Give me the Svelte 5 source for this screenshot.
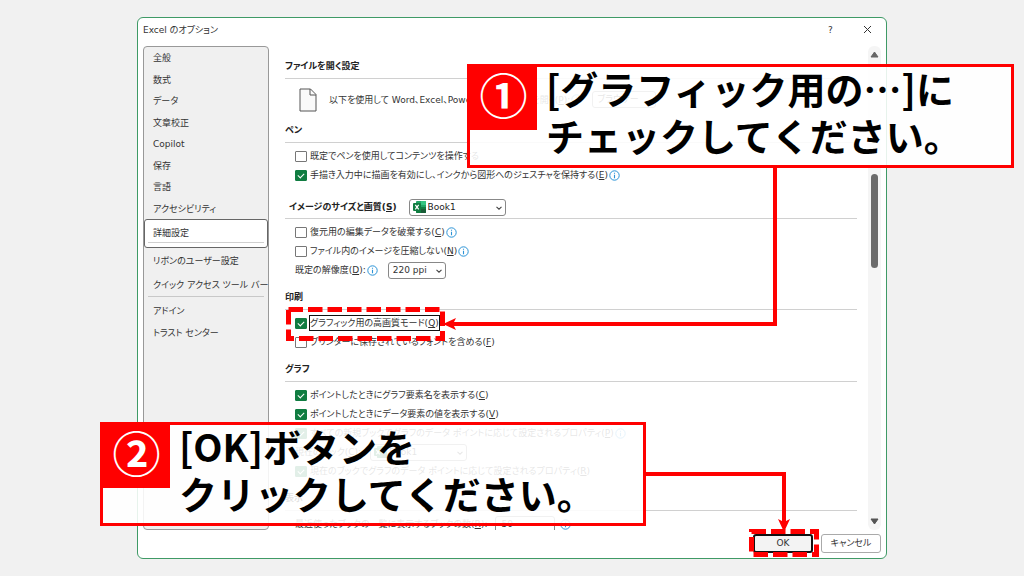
<script lang="ts">
  const navTop = ["全般", "数式", "データ", "文章校正", "Copilot", "保存", "言語", "アクセシビリティ"];
  const navMid = ["リボンのユーザー設定", "クイック アクセス ツール バー"];
  const navEnd = ["アドイン", "トラスト センター"];

  let selected = $state("詳細設定");
  let checks = $state({
    pen: false,
    ink: true,
    discard: false,
    noCompress: false,
    highQuality: true,
    printerFonts: false,
    elementNames: true,
    dataValues: true,
    allBooks: true,
    thisBook: true,
  });
  let recent = $state("50");
</script>

{#snippet info()}
  <svg class="info" viewBox="0 0 11 11" aria-hidden="true">
    <circle cx="5.5" cy="5.5" r="4.7" fill="none" stroke="#2b93d6" />
    <path d="M5.5 4.8V8.2M5.5 2.7V3.8" stroke="#2b93d6" stroke-width="1.1" />
  </svg>
{/snippet}

{#snippet chevron()}
  <svg class="chevron" viewBox="0 0 8 8" aria-hidden="true">
    <path d="M1.5 2.8L4 5.2L6.5 2.8" fill="none" stroke="#444" stroke-width="1.1" />
  </svg>
{/snippet}

{#snippet excel()}
  <svg class="excel" viewBox="0 0 13 12" aria-hidden="true">
    <path d="M4 0H12Q13 0 13 1V11Q13 12 12 12H4Q3 12 3 11V1Q3 0 4 0Z" fill="#21a366" />
    <path d="M8 0H12Q13 0 13 1V4H8Z" fill="#33c481" />
    <path d="M3 6H13V11Q13 12 12 12H4Q3 12 3 11Z" fill="#107c41" />
    <path d="M8 8H13V11Q13 12 12 12H8Z" fill="#185c37" />
    <rect y="2" width="8" height="8" rx="1" fill="#107c41" />
    <path d="M2.3 3.8L5.7 8.3M5.7 3.8L2.3 8.3" stroke="#fff" stroke-width="1.2" />
  </svg>
{/snippet}

{#snippet check(name: keyof typeof checks, text: string, key = "", hint = false, focused = false)}
  <div class="row">
    <label class="check">
      <input type="checkbox" bind:checked={checks[name]} />
      <span class="text" class:focused>{text}{#if key}({@render accel(key)}){/if}</span>
    </label>
    {#if hint}{@render info()}{/if}
  </div>
{/snippet}

{#snippet accel(key: string)}<u>{key}</u>{/snippet}

{#snippet navItem(item: string)}
  <button class="nav-item" onclick={() => (selected = item)}>{item}</button>
{/snippet}

<div class="stage">
  <div class="dialog" role="dialog" aria-labelledby="title">
    <header>
      <span id="title">Excel のオプション</span>
      <button class="icon" aria-label="ヘルプ">?</button>
      <button class="icon" aria-label="閉じる">
        <svg width="9" height="9" viewBox="0 0 9 9"><path d="M1 1L8 8M8 1L1 8" stroke="#333" /></svg>
      </button>
    </header>

    <div class="body">
      <nav>
        <div class="group top">
          {#each navTop as item}{@render navItem(item)}{/each}
        </div>
        <button class="nav-item active" aria-current={selected === "詳細設定"}>詳細設定</button>
        <div class="group mid">
          {#each navMid as item}{@render navItem(item)}{/each}
        </div>
        <div class="group end">
          {#each navEnd as item}{@render navItem(item)}{/each}
        </div>
      </nav>

      <main>
        <section>
          <h2>ファイルを開く設定</h2>
          <div class="open-row">
            <svg class="page" viewBox="0 0 18 24" aria-hidden="true">
              <path d="M1 1H11.5L17 6.5V23H1Z" fill="#fafafa" stroke="#555" />
              <path d="M11 1V7H17" fill="none" stroke="#555" />
            </svg>
            <label for="open-with">以下を使用して Word、Excel、PowerPoint ファイルを開く({@render accel("P")}):</label>
            {@render info()}
            <span class="select gap">
              <select id="open-with" class="browser"><option>ブラウザー</option></select>
            </span>
          </div>
        </section>

        <section>
          <h2>ペン</h2>
          <div class="rows">
            {@render check("pen", "既定でペンを使用してコンテンツを操作する")}
            {@render check("ink", "手描き入力中に描画を有効にし、インクから図形へのジェスチャを保持する", "E", true)}
          </div>
        </section>

        <section>
          <h2 class="with-select">
            <label for="image-book">イメージのサイズと画質({@render accel("S")})</label>
            <span class="select">
              {@render excel()}
              <select id="image-book" class="book"><option>Book1</option></select>
              {@render chevron()}
            </span>
          </h2>
          <div class="rows">
            {@render check("discard", "復元用の編集データを破棄する", "C", true)}
            {@render check("noCompress", "ファイル内のイメージを圧縮しない", "N", true)}
            <div class="row">
              <label for="ppi">既定の解像度({@render accel("D")}):</label>
              {@render info()}
              <span class="select gap">
                <select id="ppi" class="ppi"><option>220 ppi</option></select>
                {@render chevron()}
              </span>
            </div>
          </div>
        </section>

        <section>
          <h2>印刷</h2>
          <div class="rows">
            {@render check("highQuality", "グラフィック用の高画質モード", "Q", false, true)}
            {@render check("printerFonts", "プリンターに保存されているフォントを含める", "F")}
          </div>
        </section>

        <section>
          <h2>グラフ</h2>
          <div class="rows">
            {@render check("elementNames", "ポイントしたときにグラフ要素名を表示する", "C")}
            {@render check("dataValues", "ポイントしたときにデータ要素の値を表示する", "V")}
            {@render check("allBooks", "すべての新規ブックでグラフのデータ ポイントに応じて設定されるプロパティ", "P", true)}
            <div class="row">
              <label for="chart-book">現在のブック({@render accel("C")}):</label>
              <span class="select gap">
                {@render excel()}
                <select id="chart-book" class="book"><option>Book1</option></select>
                {@render chevron()}
              </span>
            </div>
            {@render check("thisBook", "現在のブックでグラフのデータ ポイントに応じて設定されるプロパティ", "R")}
          </div>
        </section>

        <section>
          <h2>表示</h2>
          <div class="rows">
            <div class="row">
              <label for="recent">最近使ったブックの一覧に表示するブックの数({@render accel("R")}):</label>
              <input id="recent" class="number" bind:value={recent} />
              {@render info()}
            </div>
          </div>
        </section>
      </main>

      <div class="scrollbar">
        <svg width="9" height="7" viewBox="0 0 9 7"><path d="M4.5 1L8 6H1Z" fill="#666" stroke="#666" stroke-linejoin="round" /></svg>
        <div class="track"><div class="thumb"></div></div>
        <svg width="9" height="7" viewBox="0 0 9 7"><path d="M4.5 6L8 1H1Z" fill="#555" stroke="#555" stroke-linejoin="round" /></svg>
      </div>
    </div>

    <footer>
      <button class="ok">OK</button>
      <button>キャンセル</button>
    </footer>
  </div>

  <!-- annotations over the dialog -->
  <svg class="marks" width="1024" height="576" viewBox="0 0 1024 576" aria-hidden="true">
    <g fill="none" stroke="#f00">
      <rect x="288.5" y="309.5" width="154" height="29" stroke-width="5" stroke-dasharray="14.5 5" />
      <rect x="751.5" y="531.5" width="65" height="23" stroke-width="5" stroke-dasharray="14.5 5" />
      <path d="M775 166V324H451M644 474H784V524" stroke-width="4" />
    </g>
    <path d="M443 324L456 318L453 324L456 330ZM784 532L778 519L784 522L790 519Z" fill="#f00" />
  </svg>
  <div class="callout first">
    <span class="number-box">①</span>
    <p>[グラフィック用の…]に<br />チェックしてください。</p>
  </div>
  <div class="callout second">
    <span class="number-box">②</span>
    <p>[OK]ボタンを<br />クリックしてください。</p>
  </div>
</div>

<style>
  :global(body) {
    background: #f1f1f1;
  }
  .stage {
    position: relative;
    box-sizing: border-box;
    height: 100vh;
    padding: 17px 137px;
    overflow: hidden;
    color: #333;
    font: 9px/18px "DejaVu Sans", "Noto Sans CJK JP", sans-serif;
    font-feature-settings: "palt";
  }
  .stage * {
    box-sizing: border-box;
  }
  button,
  select,
  input {
    margin: 0;
    color: inherit;
    font: inherit;
    font-feature-settings: inherit;
  }
  .dialog {
    display: flex;
    flex-direction: column;
    height: 100%;
    border: 1px solid #3f9a66;
    border-radius: 6px;
    background: #fff;
  }
  header {
    display: flex;
    align-items: center;
    height: 28px;
    padding: 0 10px 5px 5px;
  }
  header span {
    flex: 1;
  }
  .icon {
    display: flex;
    align-items: center;
    justify-content: center;
    width: 17px;
    height: 18px;
    margin-left: 20px;
    padding: 0;
    border: 0;
    background: none;
  }
  .body {
    display: flex;
    flex: 1;
    min-height: 0;
    padding: 0 5px;
  }

  nav {
    flex: none;
    width: 126px;
    border: 1px solid #999;
    border-radius: 4px;
    background: #f0f0f0;
  }
  .group {
    display: flex;
    flex-direction: column;
    margin: 0 4px;
  }
  .nav-item {
    flex: 1;
    width: 100%;
    padding: 1px 5px 0;
    border: 0;
    background: none;
    text-align: left;
    white-space: nowrap;
  }
  .top {
    height: 172px;
  }
  .active {
    display: block;
    height: 29px;
    padding: 0 3px;
    border: 1px solid #666;
    border-radius: 3px;
    background: #fff;
    text-indent: 5px;
  }
  .active::after {
    content: "";
    display: block;
    border-bottom: 1px solid #d0d0d0;
  }
  .mid {
    height: 49px;
    border-bottom: 1px solid #c8c8c8;
  }
  .end {
    height: 46px;
    padding-top: 3px;
  }

  main {
    flex: 1;
    min-width: 0;
    margin-left: 16px;
    padding-top: 10px;
    overflow: hidden;
  }
  h2 {
    height: 23px;
    margin: 0;
    border-bottom: 1px solid #d0d0d0;
    color: #222;
    font-size: 9px;
    line-height: 20px;
  }
  .with-select {
    display: flex;
    align-items: center;
    gap: 12px;
    height: 27px;
    padding: 4px 0 0 4px;
  }
  .open-row {
    display: flex;
    align-items: center;
    height: 41px;
    padding-left: 14px;
    white-space: nowrap;
  }
  .page {
    width: 18px;
    height: 24px;
    margin-right: 12px;
  }
  .rows {
    display: flex;
    flex-direction: column;
    gap: 1px;
    padding: 4px 0 8px 10px;
  }
  .row,
  .check {
    display: flex;
    align-items: center;
    height: 18px;
    white-space: nowrap;
  }
  .text {
    line-height: 14px;
  }
  .focused {
    outline: 1px solid #111;
  }
  input[type="checkbox"] {
    appearance: none;
    width: 12px;
    height: 11px;
    margin-right: 3px;
    border: 1px solid #777;
    border-radius: 1px;
    background: #fff;
  }
  input[type="checkbox"]:checked {
    border-color: #107c41;
    background: #107c41;
  }
  input[type="checkbox"]:checked::after {
    content: "";
    display: block;
    width: 5px;
    height: 3px;
    margin: 2px;
    border: solid #fff;
    border-width: 0 0 1px 1px;
    transform: rotate(-45deg);
  }
  .info {
    flex: none;
    width: 11px;
    height: 11px;
    margin: 0 1px;
  }
  .select {
    position: relative;
    display: flex;
    font-weight: 400;
  }
  .gap {
    margin-left: 9px;
  }
  select {
    appearance: none;
    height: 17px;
    padding: 0 4px;
    border: 1px solid #888;
    border-radius: 3px;
    background: #fff;
    line-height: 15px;
  }
  .browser {
    width: 64px;
  }
  .book {
    width: 97px;
    padding-left: 18px;
  }
  .ppi {
    width: 58px;
  }
  .chevron {
    position: absolute;
    top: 5px;
    right: 3px;
    width: 8px;
    height: 8px;
  }
  .excel {
    position: absolute;
    top: 2px;
    left: 4px;
    width: 13px;
    height: 12px;
  }
  .number {
    width: 60px;
    height: 17px;
    margin: 0 4px 0 8px;
    padding: 0 5px;
    border: 1px solid #888;
    border-radius: 3px;
  }

  .scrollbar {
    display: flex;
    flex-direction: column;
    align-items: center;
    width: 13px;
    margin-left: 11px;
    padding: 5px 0;
    border-radius: 6px;
    background: #f5f5f5;
  }
  .track {
    flex: 1;
    padding-top: 116px;
  }
  .thumb {
    width: 7px;
    height: 94px;
    border-radius: 4px;
    background: #6b6b6b;
  }

  footer {
    display: flex;
    justify-content: flex-end;
    gap: 8px;
    padding: 4px 5px 5px;
  }
  footer button {
    width: 60px;
    height: 19px;
    padding: 0;
    border: 1px solid #aaa;
    border-radius: 3px;
    background: #fff;
    line-height: 15px;
  }
  .ok {
    border: 2px solid #111;
    background: #f3f3f3;
  }

  .marks {
    position: absolute;
    top: 0;
    left: 0;
  }
  .callout {
    position: absolute;
    display: flex;
    align-items: flex-start;
    height: 104px;
    border: 3px solid #f00;
    background: rgba(255, 255, 255, 0.88);
    color: #000;
    font: 700 38px/47px "Noto Sans CJK JP", sans-serif;
    font-feature-settings: normal;
  }
  .first {
    top: 64px;
    left: 467px;
    width: 547px;
  }
  .second {
    top: 422px;
    left: 100px;
    width: 546px;
  }
  .number-box {
    width: 67px;
    height: 63px;
    background: #f00;
    color: #fff;
    font-size: 48px;
    line-height: 52px;
    text-align: center;
  }
  .callout p {
    margin: -3px 0 0 9px;
    white-space: nowrap;
  }
</style>
